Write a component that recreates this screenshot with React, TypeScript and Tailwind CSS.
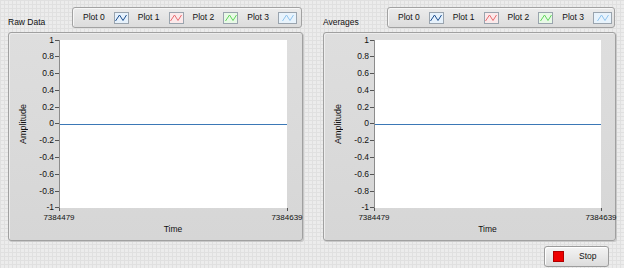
const Y_TICKS = ["1", "0.8", "0.6", "0.4", "0.2", "0", "-0.2", "-0.4", "-0.6", "-0.8", "-1"];

const PLOTS = [
  { label: "Plot 0", bg: "bg-[#e6f1fb]", stroke: "#1d4f8f", w: "w-[15px]" },
  { label: "Plot 1", bg: "bg-[#fbe9ea]", stroke: "#e86a6f", w: "w-[15px]" },
  { label: "Plot 2", bg: "bg-[#e8f9e6]", stroke: "#5fd65a", w: "w-[15px]" },
  { label: "Plot 3", bg: "bg-[#e8f3fc]", stroke: "#8ec3ee", w: "w-[19px]" },
];

function Swatch({ bg, stroke, w }: { bg: string; stroke: string; w: string }) {
  return (
    <div className={`h-[12px] ${w} ${bg} border border-[#9aa4ae] flex items-center justify-center`}>
      <svg width="12" height="8" viewBox="0 0 12 8">
        <polyline points="0.5,7 4.5,1 8,6.5 11.5,1" fill="none" stroke={stroke} strokeWidth="1" />
      </svg>
    </div>
  );
}

function Legend({ width }: { width: string }) {
  return (
    <div
      className={`${width} mt-[7px] h-[21px] flex items-center gap-[9px] pl-[10px] rounded-[3px] border border-[#a2a2a2] bg-[linear-gradient(to_bottom,#ececec,#dcdcdc)] shadow-[inset_1px_1px_0_#f7f7f7]`}
    >
      {PLOTS.map((p) => (
        <div key={p.label} className="flex items-center gap-[9px]">
          <span className="text-[8.5px] leading-[9px] text-[#111]">{p.label}</span>
          <Swatch bg={p.bg} stroke={p.stroke} w={p.w} />
        </div>
      ))}
    </div>
  );
}

function Graph({
  title,
  width,
  legendWidth,
  plotWidth,
}: {
  title: string;
  width: string;
  legendWidth: string;
  plotWidth: string;
}) {
  return (
    <div className={`${width} flex flex-col`}>
      <div className="h-[32px] flex items-start justify-between pr-[1px]">
        <span className="mt-[17px] text-[8.5px] leading-[10px] text-[#111]">{title}</span>
        <Legend width={legendWidth} />
      </div>
      <div className="h-[209px] rounded-[3px] border border-[#a0a0a0] bg-[linear-gradient(to_bottom,#dedede,#d6d6d6)] shadow-[inset_1px_1px_0_#ededed,1px_1px_0_#c8c8c8] pt-[7px]">
        <div className="flex">
          <div className="w-[28px] h-[168px] flex items-center justify-center">
            <span className="[writing-mode:vertical-rl] rotate-180 text-[9px] leading-[9px] text-[#111]">
              Amplitude
            </span>
          </div>
          <div className="w-[22px] h-[168px] flex flex-col justify-between">
            {Y_TICKS.map((t) => (
              <div key={t} className="h-0 flex items-center justify-end">
                <span className="text-[8.5px] leading-[9px] text-[#111]">{t}</span>
                <span className="ml-[1px] w-[4px] h-px bg-[#555]" />
              </div>
            ))}
          </div>
          <div className={`${plotWidth} h-[168px] bg-white border-l border-[#8c8c8c] flex items-center`}>
            <div className="w-full h-px bg-[#3b78b6]" />
          </div>
        </div>
        <div className={`${plotWidth} ml-[50px] flex justify-between`}>
          {["7384479", "7384639"].map((v) => (
            <div key={v} className="w-0 flex flex-col items-center">
              <span className="w-px h-[3px] bg-[#555]" />
              <span className="mt-[2px] text-[8px] leading-[9px] text-[#111]">{v}</span>
            </div>
          ))}
        </div>
        <div className={`${plotWidth} ml-[50px] mt-[3px] text-center text-[8.5px] leading-[9px] text-[#111]`}>
          Time
        </div>
      </div>
    </div>
  );
}

export default function App() {
  return (
    <div
      className="w-[624px] h-[268px] overflow-hidden bg-[#ececec] bg-[linear-gradient(to_right,#e0e0e0_1px,transparent_1px),linear-gradient(to_bottom,#e0e0e0_1px,transparent_1px),linear-gradient(to_right,#d6d6d6_1px,transparent_1px),linear-gradient(to_bottom,#d6d6d6_1px,transparent_1px)] bg-size-[4px_4px,4px_4px,16px_16px,16px_16px] flex gap-[20px] pl-[8px] font-['Liberation_Sans',Arial,sans-serif]"
    >
      <Graph title="Raw Data" width="w-[295px]" legendWidth="w-[230px]" plotWidth="w-[228px]" />
      <div className="flex flex-col">
        <Graph title="Averages" width="w-[293px]" legendWidth="w-[228px]" plotWidth="w-[227px]" />
        <div className="flex justify-end pr-[7px] mt-[5px]">
          <button className="w-[65px] h-[21px] flex items-center pl-[8px] rounded-[3px] border border-[#9c9c9c] bg-[linear-gradient(to_bottom,#f4f4f4,#dcdcdc)] shadow-[inset_1px_1px_0_#ffffff]">
            <span className="w-[11px] h-[11px] bg-[#ee0000] border border-[#b00000]" />
            <span className="ml-[15px] text-[8.5px] leading-[9px] text-[#111]">Stop</span>
          </button>
        </div>
      </div>
    </div>
  );
}
